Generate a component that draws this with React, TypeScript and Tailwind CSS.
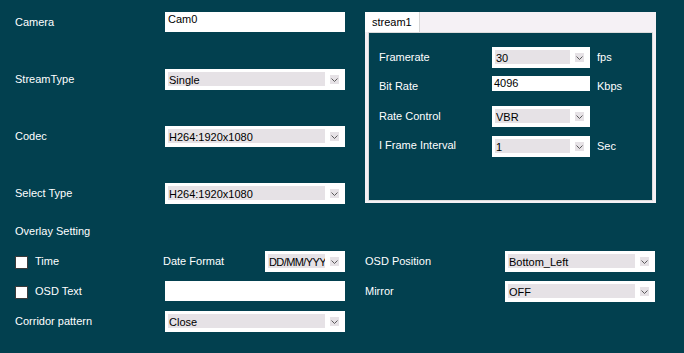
import React from 'react';

function Chevron() {
  return (
    <div className="ml-[5px] mt-[3px] flex h-[9px] w-[9px] shrink-0 items-center justify-center bg-[#E6E2E6]">
      <svg width="7" height="4" viewBox="0 0 7 4">
        <polyline points="0.5,0.5 3.5,3.5 6.5,0.5" fill="none" stroke="#5a5a5a" strokeWidth="1" />
      </svg>
    </div>
  );
}

function Combo({ value, className, textClass = '' }: { value: string; className: string; textClass?: string }) {
  return (
    <div className={`flex h-[21px] shrink-0 items-start bg-white pl-[3px] pr-[6px] pt-[3px] ${className}`}>
      <div className={`h-[14px] flex-1 overflow-hidden whitespace-nowrap bg-[#E6E2E6] pl-px leading-[16px] text-black ${textClass}`}>
        {value}
      </div>
      <Chevron />
    </div>
  );
}

function TextBox({ value, className }: { value?: string; className: string }) {
  return (
    <div className={`h-[20px] shrink-0 bg-white pl-[3px] pt-px leading-[12px] text-black ${className}`}>
      {value}
    </div>
  );
}

function CheckBox() {
  return <div className="mt-[2px] h-[13px] w-[13px] shrink-0 self-start border border-[#3a3a3a] bg-white" />;
}

export default function App() {
  return (
    <div className="h-[353px] w-[684px] overflow-hidden bg-[#02404F] text-[11px] leading-[13px] text-white [font-family:'Liberation_Sans',Arial,sans-serif]">
      <div className="flex items-start">
        {/* left column */}
        <div className="w-[365px] pl-[15px] pt-[12px]">
          <div className="flex h-[20px] items-center">
            <span className="w-[150px]">Camera</span>
            <TextBox value="Cam0" className="w-[180px]" />
          </div>
          <div className="mt-[37px] flex h-[21px] items-center">
            <span className="w-[150px]">StreamType</span>
            <Combo value="Single" className="w-[180px]" />
          </div>
          <div className="mt-[36px] flex h-[21px] items-center">
            <span className="w-[150px]">Codec</span>
            <Combo value="H264:1920x1080" className="w-[180px]" />
          </div>
          <div className="mt-[36px] flex h-[21px] items-center">
            <span className="w-[150px]">Select Type</span>
            <Combo value="H264:1920x1080" className="w-[180px]" />
          </div>
          <div className="mt-[17px] flex h-[20px] items-center">
            <span>Overlay Setting</span>
          </div>
        </div>

        {/* stream panel */}
        <div className="mt-[12px] flex h-[191px] w-[291px] flex-col bg-[#F5F1F5] px-[3px] pb-[2px]">
          <div className="flex h-[20px] shrink-0">
            <div className="-ml-[3px] flex w-[55px] items-center border-r border-[#D6D6D6] bg-white pl-[7px] text-black">
              stream1
            </div>
          </div>
          <div className="flex-1 border border-[#DCDCDC] bg-[#02404F] pl-[10px] pt-[14px]">
            <div className="flex h-[21px] items-center">
              <span className="w-[113px]">Framerate</span>
              <Combo value="30" className="w-[98px]" />
              <span className="ml-[7px]">fps</span>
            </div>
            <div className="mt-[8px] flex h-[17px] items-start">
              <span className="mt-[4px] w-[113px]">Bit Rate</span>
              <div className="h-[15px] w-[98px] shrink-0 bg-white pl-[2px] leading-[15px] text-black">4096</div>
              <span className="ml-[7px] mt-[4px]">Kbps</span>
            </div>
            <div className="mt-[13px] flex h-[21px] items-center">
              <span className="w-[113px]">Rate Control</span>
              <Combo value="VBR" className="w-[98px]" />
            </div>
            <div className="mt-[9px] flex h-[21px] items-center">
              <span className="-mt-[2px] w-[113px]">I Frame Interval</span>
              <Combo value="1" className="w-[98px]" />
              <span className="ml-[7px]">Sec</span>
            </div>
          </div>
        </div>
      </div>

      {/* overlay rows */}
      <div className="mt-[10px] pl-[15px]">
        <div className="flex h-[21px] items-center">
          <div className="flex w-[148px] items-center">
            <CheckBox />
            <span className="ml-[7px]">Time</span>
          </div>
          <span className="w-[102px]">Date Format</span>
          <Combo value="DD/MM/YYY" className="w-[80px]" textClass="tracking-[-0.6px]" />
          <span className="ml-[20px] w-[140px]">OSD Position</span>
          <Combo value="Bottom_Left" className="w-[150px]" />
        </div>
        <div className="mt-[9px] flex h-[21px] items-center">
          <div className="flex w-[150px] items-center">
            <CheckBox />
            <span className="ml-[7px]">OSD Text</span>
          </div>
          <TextBox className="w-[180px] self-start" />
          <span className="ml-[20px] w-[140px]">Mirror</span>
          <Combo value="OFF" className="w-[150px]" />
        </div>
        <div className="mt-[9px] flex h-[21px] items-center">
          <span className="w-[150px]">Corridor pattern</span>
          <Combo value="Close" className="w-[180px]" />
        </div>
      </div>
    </div>
  );
}
